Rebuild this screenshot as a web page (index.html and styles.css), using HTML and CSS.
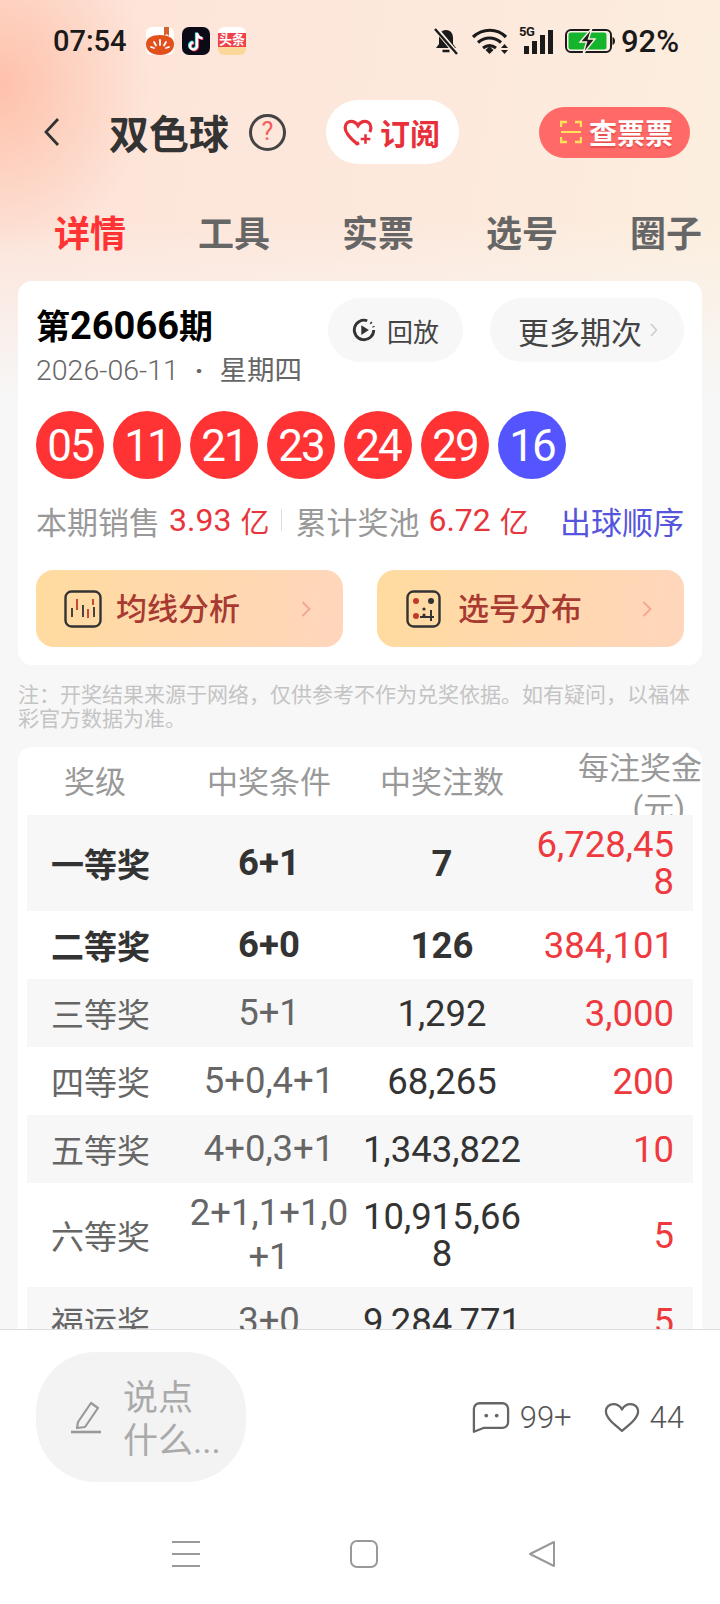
FILE: index.html
```html
<!DOCTYPE html>
<html lang="zh-CN">
<head>
  <meta charset="UTF-8">
  <title>双色球</title>
  <link rel="stylesheet" href="styles.css">
</head>
<body>
  <div class="app">
    <div class="scroll">
      <div class="status">
        <span class="time">07:54</span>
        <div class="apps">
          <svg class="app-icon" viewBox="0 0 28 28">
            <rect width="28" height="28" rx="6" fill="#fff"/>
            <path d="M18 0h5v9l-2.500-2-2.500 2z" fill="#d9622c"/>
            <path d="M0 17c0-6 6-9 14-9s14 3 14 9c0 7-6 11-14 11S0 24 0 17z" fill="#e2501c"/>
            <path d="M14 13v5M8 15l2 3.500M20 15l-2 3.500M5 20l3 1M23 20l-3 1" stroke="#fff" stroke-width="1.800" stroke-linecap="round"/>
          </svg>
          <svg class="app-icon" viewBox="0 0 28 28">
            <rect width="28" height="28" rx="7" fill="#0b0b18"/>
            <path d="M15 6v13a3.500 3.500 0 1 1-3.500-3.500M15 6c.5 3 2.500 5 5.500 5.300" fill="none" stroke="#2ee6e6" stroke-width="2.600" transform="translate(-.8 -.6)"/>
            <path d="M15 6v13a3.500 3.500 0 1 1-3.500-3.500M15 6c.5 3 2.500 5 5.500 5.300" fill="none" stroke="#fe2c55" stroke-width="2.600" transform="translate(.8 .6)"/>
            <path d="M15 6v13a3.500 3.500 0 1 1-3.500-3.500M15 6c.5 3 2.500 5 5.500 5.300" fill="none" stroke="#fff" stroke-width="2.400"/>
          </svg>
          <div class="app-toutiao"><span class="toutiao-band">头条</span></div>
        </div>
        <div class="sys">
          <svg class="i-bell" viewBox="0 0 26 27">
            <path d="M13 2c-5 0-7 4-7 8v6l-3 4h20l-3-4v-6c0-4-2-8-7-8z" fill="#1a1a1a"/>
            <path d="M9.500 23h7" stroke="#1a1a1a" stroke-width="2.500"/>
            <path d="M3 1l21 25" stroke="#fdf0e2" stroke-width="5"/>
            <path d="M2 1l22 25" stroke="#1a1a1a" stroke-width="2.400"/>
          </svg>
          <svg class="i-wifi" viewBox="0 0 38 27">
            <path d="M2 9c10-9 24-9 33 0M7 14.500c7-6 16-6 23 0M12 20c4-3 9-3 13 0" fill="none" stroke="#1a1a1a" stroke-width="3.200"/>
            <path d="M14.500 22l4-3.500 4 3.500-4 4z" fill="#1a1a1a"/>
            <path d="M30 20l3.500-4 3.500 4zM30 22l3.500 4 3.500-4z" fill="#1a1a1a"/>
          </svg>
          <div class="signal">
            <span class="five-g">5G</span>
            <div class="bars"><i class="bar b1"></i><i class="bar b2"></i><i class="bar b3"></i><i class="bar b4"></i></div>
          </div>
          <svg class="i-batt" viewBox="0 0 50 26">
            <rect x="1" y="2" width="45" height="22" rx="5" fill="#fff" fill-opacity=".3" stroke="#1a1a1a" stroke-width="2"/>
            <rect x="3.500" y="4.500" width="38" height="17" rx="2.500" fill="#14b52c"/>
            <path d="M47.500 9c1.500.5 2.500 2 2.500 4s-1 3.500-2.500 4z" fill="#1a1a1a"/>
            <path d="M27 0L15 14h6.500L18 26l12-15h-6.500L27 0z" fill="#1a1a1a" stroke="#fdf0e2" stroke-width="1.400"/>
          </svg>
          <span class="pct">92%</span>
        </div>
      </div>

      <div class="header">
        <svg class="back" viewBox="0 0 17 30"><path d="M15 2L3 15l12 13" fill="none" stroke="#333" stroke-width="2.800"/></svg>
        <span class="title">双色球</span>
        <div class="help">?</div>
        <div class="sub-btn">
          <svg class="sub-heart" viewBox="0 0 28 28">
            <path d="M15 24l-2 1C7 20 2 15 2 10c0-4 3-6 5.500-6 3 0 5 1.500 6.500 4 1.500-2.500 3.500-4 6.500-4C23 4 26 6 26 10c0 1.500-.5 3-1 4" fill="none" stroke="#e8303a" stroke-width="3"/>
            <path d="M21 16v9M16.500 20.500h9" stroke="#e8303a" stroke-width="2.400"/>
          </svg>
          <span>订阅</span>
        </div>
        <div class="check-btn">
          <svg class="scan" viewBox="0 0 22 24">
            <path d="M1 7V2h6M15 2h6v5M1 17v5h6M15 22h6v-5" fill="none" stroke="#ffe15c" stroke-width="2.400"/>
            <path d="M1 12h20" stroke="#ffe15c" stroke-width="2"/>
          </svg>
          <span>查票票</span>
        </div>
      </div>

      <div class="tabs">
        <span class="tab active">详情</span>
        <span class="tab">工具</span>
        <span class="tab">实票</span>
        <span class="tab">选号</span>
        <span class="tab">圈子</span>
      </div>

      <div class="content">
        <div class="card draw">
          <div class="draw-top">
            <div class="draw-info">
              <div class="issue">第<span class="issue-no">26066</span>期</div>
              <div class="date"><span>2026-06-11</span><span class="dot">·</span><span class="weekday">星期四</span></div>
            </div>
            <div class="draw-actions">
              <div class="pill replay">
                <svg class="replay-icon" viewBox="0 0 24 24">
                  <path d="M15 3.500A9 9 0 1 0 21 12" fill="none" stroke="#333" stroke-width="2.600"/>
                  <path d="M18 5l1 1M20.500 8.500l.5 1" stroke="#333" stroke-width="2.200"/>
                  <path d="M9.500 7.500l7 4.500-7 4.500z" fill="#333"/>
                </svg>
                <span>回放</span>
              </div>
              <div class="pill more">
                <span>更多期次</span>
                <svg class="more-arrow" viewBox="0 0 8 14"><path d="M1 1l5.500 6L1 13" fill="none" stroke="#ccc" stroke-width="1.600"/></svg>
              </div>
            </div>
          </div>
          <div class="balls">
            <span class="ball">05</span>
            <span class="ball">11</span>
            <span class="ball">21</span>
            <span class="ball">23</span>
            <span class="ball">24</span>
            <span class="ball">29</span>
            <span class="ball blue">16</span>
          </div>
          <div class="sales">
            <span class="sales-label">本期销售</span>
            <span class="sales-num">3.93</span>
            <span class="sales-unit">亿</span>
            <i class="sales-sep"></i>
            <span class="sales-label">累计奖池</span>
            <span class="sales-num">6.72</span>
            <span class="sales-unit">亿</span>
            <span class="order">出球顺序</span>
          </div>
          <div class="tools">
            <div class="tool tool-a">
              <svg class="tool-icon" viewBox="0 0 38 38">
                <rect x="1.500" y="1.500" width="35" height="35" rx="6" fill="none" stroke="#333" stroke-width="2.400"/>
                <path d="M8 18v9M19 15v12M30 17v10" stroke="#333" stroke-width="1.800"/>
                <path d="M13 9v11M24 19v9M29 9v6" stroke="#c0392b" stroke-width="1.800"/>
              </svg>
              <span class="tool-text">均线分析</span>
              <svg class="tool-arrow" viewBox="0 0 10 18"><path d="M1.500 2l7 7-7 7" fill="none" stroke="#f2a593" stroke-width="1.800"/></svg>
            </div>
            <div class="tool tool-b">
              <svg class="tool-icon dice" viewBox="0 0 35 38">
                <rect x="1.500" y="1.500" width="32" height="35" rx="6" fill="none" stroke="#333" stroke-width="2.400"/>
                <circle cx="10" cy="11" r="3" fill="#c0392b"/>
                <circle cx="25" cy="11" r="3" fill="#333"/>
                <circle cx="10" cy="26" r="3" fill="#c0392b"/>
                <circle cx="18" cy="19" r="1.600" fill="#333"/>
                <circle cx="18" cy="25" r="1.600" fill="#333"/>
                <path d="M14 27h14M25 20v11" stroke="#333" stroke-width="2"/>
              </svg>
              <span class="tool-text">选号分布</span>
              <svg class="tool-arrow" viewBox="0 0 10 18"><path d="M1.500 2l7 7-7 7" fill="none" stroke="#f2a593" stroke-width="1.800"/></svg>
            </div>
          </div>
        </div>

        <p class="note">注：开奖结果来源于网络，仅供参考不作为兑奖依据。如有疑问，以福体彩官方数据为准。</p>

        <div class="card prizes">
          <div class="prize-head">
            <span class="head-level">奖级</span>
            <span class="head-cell">中奖条件</span>
            <span class="head-cell">中奖注数</span>
            <span class="head-money">每注奖金<span class="head-unit">(元)</span></span>
          </div>
          <div class="row top tall">
            <span class="level">一等奖</span><span class="cond">6+1</span><span class="count">7</span><span class="money">6,728,45<br>8</span>
          </div>
          <div class="row top">
            <span class="level">二等奖</span><span class="cond">6+0</span><span class="count">126</span><span class="money">384,101</span>
          </div>
          <div class="row">
            <span class="level">三等奖</span><span class="cond">5+1</span><span class="count">1,292</span><span class="money">3,000</span>
          </div>
          <div class="row">
            <span class="level">四等奖</span><span class="cond">5+0,4+1</span><span class="count">68,265</span><span class="money">200</span>
          </div>
          <div class="row">
            <span class="level">五等奖</span><span class="cond">4+0,3+1</span><span class="count">1,343,822</span><span class="money">10</span>
          </div>
          <div class="row taller">
            <span class="level">六等奖</span><span class="cond">2+1,1+1,0<br>+1</span><span class="count">10,915,66<br>8</span><span class="money">5</span>
          </div>
          <div class="row">
            <span class="level">福运奖</span><span class="cond">3+0</span><span class="count">9,284,771</span><span class="money">5</span>
          </div>
        </div>
      </div>
    </div>

    <div class="bottom">
      <div class="actions">
        <div class="say">
          <svg class="pencil" viewBox="0 0 32 34">
            <path d="M8 22L21 3l7 5-13 19-8 1z" fill="none" stroke="#999" stroke-width="2.200" stroke-linejoin="round"/>
            <path d="M1 32h30" stroke="#999" stroke-width="2.600"/>
          </svg>
          <span class="say-text">说点什么...</span>
        </div>
        <div class="stats">
          <svg class="comment" viewBox="0 0 40 34">
            <path d="M8 2h24a6 6 0 0 1 6 6v14a6 6 0 0 1-6 6H12l-10 4V8a6 6 0 0 1 6-6z" fill="none" stroke="#666" stroke-width="2.400" stroke-linejoin="round"/>
            <circle cx="15" cy="15" r="2" fill="#666"/>
            <circle cx="26" cy="15" r="2" fill="#666"/>
          </svg>
          <span class="stat-num">99+</span>
          <svg class="like" viewBox="0 0 38 32">
            <path d="M19 30C9 22 2 16 2 9.500 2 5 5.500 2 10 2c4 0 7 2 9 5.500C21 4 24 2 28 2c4.500 0 8 3 8 7.500C36 16 29 22 19 30z" fill="none" stroke="#666" stroke-width="2.400" stroke-linejoin="round"/>
          </svg>
          <span class="stat-num">44</span>
        </div>
      </div>
      <div class="nav">
        <svg class="nav-icon" viewBox="0 0 28 28"><path d="M0 2h28M0 14h28M0 26h28" stroke="#999" stroke-width="2"/></svg>
        <svg class="nav-icon" viewBox="0 0 28 28"><rect x="1" y="1" width="26" height="26" rx="6" fill="none" stroke="#999" stroke-width="2"/></svg>
        <svg class="nav-icon" viewBox="0 0 28 28"><path d="M26 2v24L2 14z" fill="none" stroke="#999" stroke-width="2" stroke-linejoin="round"/></svg>
      </div>
    </div>
  </div>
</body>
</html>
```

FILE: styles.css
```css
* {
  box-sizing: border-box;
}

body {
  margin: 0;
  font-family: Roboto, "Noto Sans CJK SC", sans-serif;
  color: #333;
}

.app {
  width: 720px;
  height: 1604px;
  display: flex;
  flex-direction: column;
  overflow: hidden;
  background: #f7f7f7;
}

.scroll {
  height: 1329px;
  overflow: hidden;
  background:
    radial-gradient(ellipse 150px 170px at 0 85px, rgba(255, 170, 140, .6), rgba(255, 170, 140, 0)) no-repeat,
    linear-gradient(to bottom, rgba(247, 247, 247, 0) 0, rgba(247, 247, 247, 0) 220px, #f7f7f7 400px) no-repeat,
    linear-gradient(100deg, #fde3d8 0, #fde8dc 45%, #fbf2df 100%) no-repeat;
}

/* status bar */
.status {
  height: 82px;
  padding: 0 41px 0 53px;
  display: flex;
  align-items: center;
}

.time {
  font-size: 29px;
  font-weight: 500;
  color: #1a1a1a;
  width: 93px;
}

.apps {
  display: flex;
  gap: 8px;
}

.app-icon {
  width: 28px;
  height: 28px;
}

.app-toutiao {
  width: 28px;
  height: 28px;
  border-radius: 6px;
  background: linear-gradient(to bottom, #fff 0, #fff 20%, #f0404a 20%, #f0404a 72%, #fbd79a 72%);
  display: flex;
  justify-content: center;
}

.toutiao-band {
  font-size: 13px;
  font-weight: 700;
  line-height: 15px;
  margin-top: 5px;
  height: 15px;
  color: #fff;
}

.sys {
  margin-left: auto;
  display: flex;
  align-items: center;
}

.i-bell {
  width: 26px;
  height: 27px;
}

.i-wifi {
  width: 38px;
  height: 27px;
  margin-left: 12px;
}

.signal {
  position: relative;
  width: 34px;
  height: 26px;
  margin-left: 10px;
}

.five-g {
  position: absolute;
  left: 0;
  top: -3px;
  font-size: 13px;
  line-height: 13px;
  font-weight: 700;
  color: #1a1a1a;
  letter-spacing: -.5px;
}

.bars {
  height: 26px;
  display: flex;
  justify-content: flex-end;
  align-items: flex-end;
  gap: 3px;
}

.bar {
  width: 5px;
  background: #1a1a1a;
}

.b1 { height: 8px; }
.b2 { height: 13px; }
.b3 { height: 19px; }
.b4 { height: 24px; }

.i-batt {
  width: 50px;
  height: 26px;
  margin-left: 12px;
}

.pct {
  margin-left: 6px;
  font-size: 31px;
  font-weight: 500;
  color: #1a1a1a;
}

/* title row */
.header {
  margin-top: 18px;
  height: 64px;
  padding-left: 43px;
  padding-right: 30px;
  display: flex;
  align-items: center;
}

.back {
  width: 17px;
  height: 30px;
}

.title {
  margin-left: 49px;
  font-size: 40px;
  font-weight: 700;
  color: #333;
}

.help {
  margin-left: 20px;
  width: 37px;
  height: 37px;
  border: 3px solid #444;
  border-radius: 50%;
  color: #f0605a;
  font-size: 25px;
  line-height: 30px;
  text-align: center;
}

.sub-btn {
  margin-left: 40px;
  width: 133px;
  height: 64px;
  border-radius: 32px;
  background: #fff;
  display: flex;
  align-items: center;
  padding-left: 17px;
  gap: 7px;
  color: #e8303a;
  font-size: 30px;
  font-weight: 700;
}

.sub-heart {
  width: 30px;
  height: 30px;
}

.check-btn {
  margin-left: auto;
  width: 151px;
  height: 51px;
  border-radius: 26px;
  background: #ff6a68;
  display: flex;
  align-items: center;
  padding-left: 21px;
  gap: 7px;
  color: #fff;
  font-size: 28px;
  font-weight: 700;
  text-shadow: 0 2px 1px rgba(190, 40, 40, .4);
}

.scan {
  width: 22px;
  height: 24px;
}

/* tabs */
.tabs {
  margin-top: 37px;
  height: 60px;
  padding-left: 54px;
  display: flex;
  align-items: center;
  gap: 72px;
}

.tab {
  font-size: 36px;
  font-weight: 700;
  color: #666;
  white-space: nowrap;
}

.tab.active {
  color: #f33;
}

.content {
  padding: 20px 18px 0;
}

.card {
  background: #fff;
  border-radius: 14px;
}

/* draw card */
.draw {
  padding: 17px 18px 18px;
}

.draw-top {
  height: 113px;
  display: flex;
  justify-content: space-between;
}

.draw-info {
  padding-top: 6px;
}

.issue {
  height: 44px;
  line-height: 44px;
  font-size: 34px;
  font-weight: 700;
  color: #000;
  white-space: nowrap;
}

.issue-no {
  font-size: 38px;
  font-weight: 700;
}

.date {
  margin-top: 5px;
  height: 36px;
  line-height: 36px;
  font-size: 28.500px;
  font-weight: 300;
  color: #666;
  white-space: nowrap;
}

.dot {
  margin: 0 16px;
  font-weight: 700;
}

.weekday {
  font-size: 27.500px;
  font-weight: 400;
}

.draw-actions {
  display: flex;
  gap: 27px;
}

.pill {
  height: 64px;
  border-radius: 32px;
  background: #f7f7f7;
  display: flex;
  align-items: center;
  color: #444;
  white-space: nowrap;
}

.replay {
  width: 135px;
  padding-left: 23px;
  gap: 10px;
  font-size: 26px;
}

.replay-icon {
  width: 26px;
  height: 26px;
}

.more {
  width: 194px;
  padding-left: 28px;
  gap: 8px;
  font-size: 31px;
}

.more-arrow {
  width: 8px;
  height: 14px;
}

.balls {
  height: 68px;
  display: flex;
  gap: 9px;
}

.ball {
  width: 68px;
  height: 68px;
  border-radius: 50%;
  background: #f33;
  color: #fff;
  font-size: 44px;
  letter-spacing: -2px;
  line-height: 71px;
  text-align: center;
}

.ball.blue {
  background: #5555ff;
}

.sales {
  margin-top: 20px;
  height: 42px;
  display: flex;
  align-items: center;
  white-space: nowrap;
}

.sales-label {
  font-size: 31px;
  color: #999;
}

.sales-num {
  margin-left: 9px;
  font-size: 32px;
  color: #e8353b;
}

.sales-unit {
  margin-left: 9px;
  font-size: 29px;
  color: #e8353b;
}

.sales-sep {
  width: 1px;
  height: 22px;
  margin: 0 13px 0 12px;
  background: #ddd;
}

.order {
  margin-left: auto;
  font-size: 31px;
  color: #5555dd;
}

.tools {
  margin-top: 29px;
  display: flex;
  justify-content: space-between;
}

.tool {
  width: 307px;
  height: 77px;
  border-radius: 18px;
  background: linear-gradient(100deg, #ffdb9f, #ffd6bc);
  display: flex;
  align-items: center;
  color: #a83a32;
  font-size: 31px;
  font-weight: 500;
}

.tool-a {
  padding-left: 28px;
}

.tool-b {
  padding-left: 29px;
}

.tool-icon {
  width: 38px;
  height: 38px;
}

.tool-icon.dice {
  width: 35px;
}

.tool-text {
  margin-left: 14px;
  padding-bottom: 4px;
  white-space: nowrap;
}

.tool-b .tool-text {
  margin-left: 17px;
}

.tool-arrow {
  margin-left: auto;
  margin-right: 32px;
  width: 10px;
  height: 18px;
}

.note {
  margin: 18px 12px 16px 0;
  font-size: 21px;
  line-height: 24px;
  color: #c4c4c4;
}

/* prize table */
.prizes {
  padding: 0 9px;
  overflow: hidden;
}

.prize-head,
.row {
  display: grid;
  grid-template-columns: 157px 170px 176px 163px;
  align-items: center;
}

.prize-head {
  height: 68px;
  overflow: hidden;
  font-size: 31px;
  color: #999;
  grid-template-columns: 157px 170px 176px 172px;
  margin-right: -9px;
}

.head-level {
  padding-left: 37px;
  margin-bottom: 18px;
}

.head-cell {
  margin-bottom: 18px;
  text-align: center;
}

.head-money {
  align-self: start;
  margin-top: 2px;
  line-height: 40px;
  text-align: right;
}

.head-unit {
  display: block;
  margin-right: 17px;
}

.row {
  height: 68px;
  background: #fff;
}

.row:nth-child(even) {
  background: #f7f7f7;
}

.row.tall {
  height: 96px;
}

.row.taller {
  height: 104px;
}

.level {
  padding-left: 24px;
  font-size: 33px;
  color: #666;
  white-space: nowrap;
}

.cond,
.count,
.money {
  font-size: 36.500px;
  white-space: nowrap;
}

.cond {
  color: #666;
  text-align: center;
  line-height: 44px;
}

.count {
  color: #333;
  text-align: center;
  line-height: 37px;
}

.money {
  color: #ee3a3e;
  text-align: right;
  padding-right: 19px;
  line-height: 37px;
}

.row.top .level,
.row.top .cond,
.row.top .count {
  color: #333;
  font-weight: 700;
}

/* bottom bar */
.bottom {
  flex: 1;
  background: #fff;
  border-top: 1px solid #ddd;
}

.actions {
  padding: 22px 36px 0;
  height: 153px;
  display: flex;
  align-items: flex-start;
  justify-content: space-between;
}

.say {
  width: 210px;
  height: 130px;
  border-radius: 60px;
  background: #f3f3f3;
  display: flex;
  align-items: center;
  padding-left: 34px;
  gap: 21px;
}

.pencil {
  flex: none;
  width: 32px;
  height: 34px;
}

.say-text {
  width: 100px;
  padding-top: 5px;
  font-size: 35px;
  line-height: 43px;
  color: #aaa;
}

.stats {
  height: 130px;
  display: flex;
  align-items: center;
  color: #555;
}

.comment {
  width: 38px;
  height: 33px;
}

.like {
  margin-left: 32px;
  width: 36px;
  height: 31px;
}

.stat-num {
  margin-left: 10px;
  font-size: 31px;
  font-weight: 300;
}

.nav {
  display: flex;
  justify-content: center;
  gap: 150px;
  padding-top: 57px;
  padding-left: 8px;
}

.nav-icon {
  width: 28px;
  height: 28px;
}
```
